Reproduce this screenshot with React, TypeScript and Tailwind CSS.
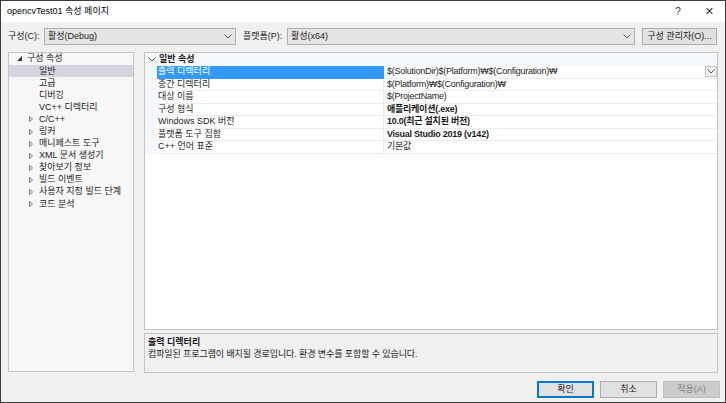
import React from 'react';

const FONT = { fontFamily: '"Liberation Sans", "DejaVu Sans", "Noto Sans CJK KR", sans-serif' };

function Chevron({ className = '' }: { className?: string }) {
  return (
    <svg width="8" height="5" viewBox="0 0 8 5" className={className}>
      <path d="M0.5 0.5 L4 4 L7.5 0.5" fill="none" stroke="#5a5a5a" strokeWidth="1" />
    </svg>
  );
}

function Combo({ value, width }: { value: string; width: string }) {
  return (
    <div className={`${width} h-[17px] flex items-center justify-between bg-[#e5e5e5] border border-[#adadad] pl-[3px] pr-[3px]`}>
      <span>{value}</span>
      <Chevron />
    </div>
  );
}

const tree = [
  { label: '일반', selected: true },
  { label: '고급' },
  { label: '디버깅' },
  { label: 'VC++ 디렉터리' },
  { label: 'C/C++', arrow: true },
  { label: '링커', arrow: true },
  { label: '매니페스트 도구', arrow: true },
  { label: 'XML 문서 생성기', arrow: true },
  { label: '찾아보기 정보', arrow: true },
  { label: '빌드 이벤트', arrow: true },
  { label: '사용자 지정 빌드 단계', arrow: true },
  { label: '코드 분석', arrow: true },
];

const props = [
  { name: '출력 디렉터리', value: '$(SolutionDir)$(Platform)₩$(Configuration)₩', selected: true },
  { name: '중간 디렉터리', value: '$(Platform)₩$(Configuration)₩' },
  { name: '대상 이름', value: '$(ProjectName)' },
  { name: '구성 형식', value: '애플리케이션(.exe)', bold: true },
  { name: 'Windows SDK 버전', value: '10.0(최근 설치된 버전)', bold: true },
  { name: '플랫폼 도구 집합', value: 'Visual Studio 2019 (v142)', bold: true },
  { name: 'C++ 언어 표준', value: '기본값' },
];

export default function App() {
  return (
    <div style={FONT} className="w-[726px] h-[403px] flex flex-col bg-[#f0f0f0] border border-[#3c3c3c] text-[9px] leading-none text-[#1b1b1b] overflow-hidden">
      {/* 제목 표시줄 */}
      <div className="h-[21px] shrink-0 bg-white flex items-center justify-between pl-[6px] pr-[11px]">
        <span className="text-[9px] text-black">opencvTest01 속성 페이지</span>
        <div className="flex items-center gap-[24px] text-[10px] text-[#333]">
          <span>?</span>
          <span className="text-[11px]">✕</span>
        </div>
      </div>

      {/* 구성 / 플랫폼 */}
      <div className="mt-[6px] h-[17px] flex items-center pl-[7px] pr-[7px]">
        <span className="w-[36px]">구성(C):</span>
        <Combo value="활성(Debug)" width="w-[192px]" />
        <span className="ml-[7px] w-[44px]">플랫폼(P):</span>
        <Combo value="활성(x64)" width="w-[348px]" />
        <div className="ml-[7px] w-[75px] h-[17px] flex items-center justify-center bg-[#e1e1e1] border border-[#adadad]">
          구성 관리자(O)...
        </div>
      </div>

      {/* 본문 */}
      <div className="mt-[7px] flex gap-[10px] pl-[7px] pr-[7px]">
        {/* 트리 */}
        <div className="w-[126px] h-[320px] shrink-0 bg-[#f7f7f7] border border-[#c4c4c4]">
          <div className="h-[12px] pb-[2px] flex items-center pl-[8px]">
            <svg width="5" height="5" viewBox="0 0 5 5" className="mr-[5px]">
              <path d="M5 0 L5 5 L0 5 Z" fill="#3a3a3a" />
            </svg>
            <span>구성 속성</span>
          </div>
          {tree.map((t) => (
            <div
              key={t.label}
              className={`h-[12.1px] flex items-center pl-[20px] ${t.selected ? 'bg-[#d5d5e0]' : ''}`}
            >
              <span className="w-[10px] flex items-center">
                {t.arrow && (
                  <svg width="4" height="6" viewBox="0 0 4 6">
                    <path d="M0.5 0.5 L3.5 3 L0.5 5.5 Z" fill="none" stroke="#5a5a5a" strokeWidth="0.8" />
                  </svg>
                )}
              </span>
              <span>{t.label}</span>
            </div>
          ))}
        </div>

        {/* 속성 그리드 + 설명 */}
        <div className="w-[575px] flex flex-col gap-[3px]">
          <div className="h-[278px] bg-white border border-[#c4c4c4] flex flex-col">
            <div className="h-[13px] flex items-center bg-[#f4f7fb]">
              <Chevron className="ml-[3px] mr-[3px]" />
              <span className="font-bold">일반 속성</span>
            </div>
            {props.map((p) => (
              <div key={p.name} className="h-[12.5px] flex bg-[#f4f7fb]">
                <div className="w-[12px]" />
                <div
                  className={`w-[227px] flex items-center pl-[1px] border-b border-r ${
                    p.selected ? 'bg-[#3399ff] text-white border-[#3399ff]' : 'bg-white border-[#ececec]'
                  }`}
                >
                  {p.name}
                </div>
                <div className="flex-1 flex items-center justify-between pl-[3px] bg-white border-b border-[#ececec]">
                  <span className={`tracking-[-0.25px] ${p.bold ? 'font-bold' : ''}`}>{p.value}</span>
                  {p.selected && (
                    <div className="w-[12px] h-[11px] flex items-center justify-center bg-[#f0f0f0] border border-[#c4c4c4]">
                      <Chevron />
                    </div>
                  )}
                </div>
              </div>
            ))}
            <div className="flex-1" />
          </div>
          <div className="h-[40px] bg-[#f0f0f0] border border-[#c4c4c4] pl-[3px] pt-[4px] flex flex-col gap-[3px]">
            <span className="font-bold">출력 디렉터리</span>
            <span className="tracking-[-0.1px]">컴파일된 프로그램이 배치될 경로입니다. 환경 변수를 포함할 수 있습니다.</span>
          </div>
        </div>
      </div>

      {/* 버튼 */}
      <div className="mt-[8px] flex justify-end gap-[6px] pr-[5px]">
        <div className="w-[57px] h-[17px] flex items-center justify-center bg-[#e1e1e1] border border-[#0078d7] outline outline-1 -outline-offset-2 outline-[#0078d7]">
          확인
        </div>
        <div className="w-[57px] h-[17px] flex items-center justify-center bg-[#e1e1e1] border border-[#adadad]">
          취소
        </div>
        <div className="w-[57px] h-[17px] flex items-center justify-center bg-[#cccccc] border border-[#bfbfbf] text-[#838383]">
          적용(A)
        </div>
      </div>
    </div>
  );
}
